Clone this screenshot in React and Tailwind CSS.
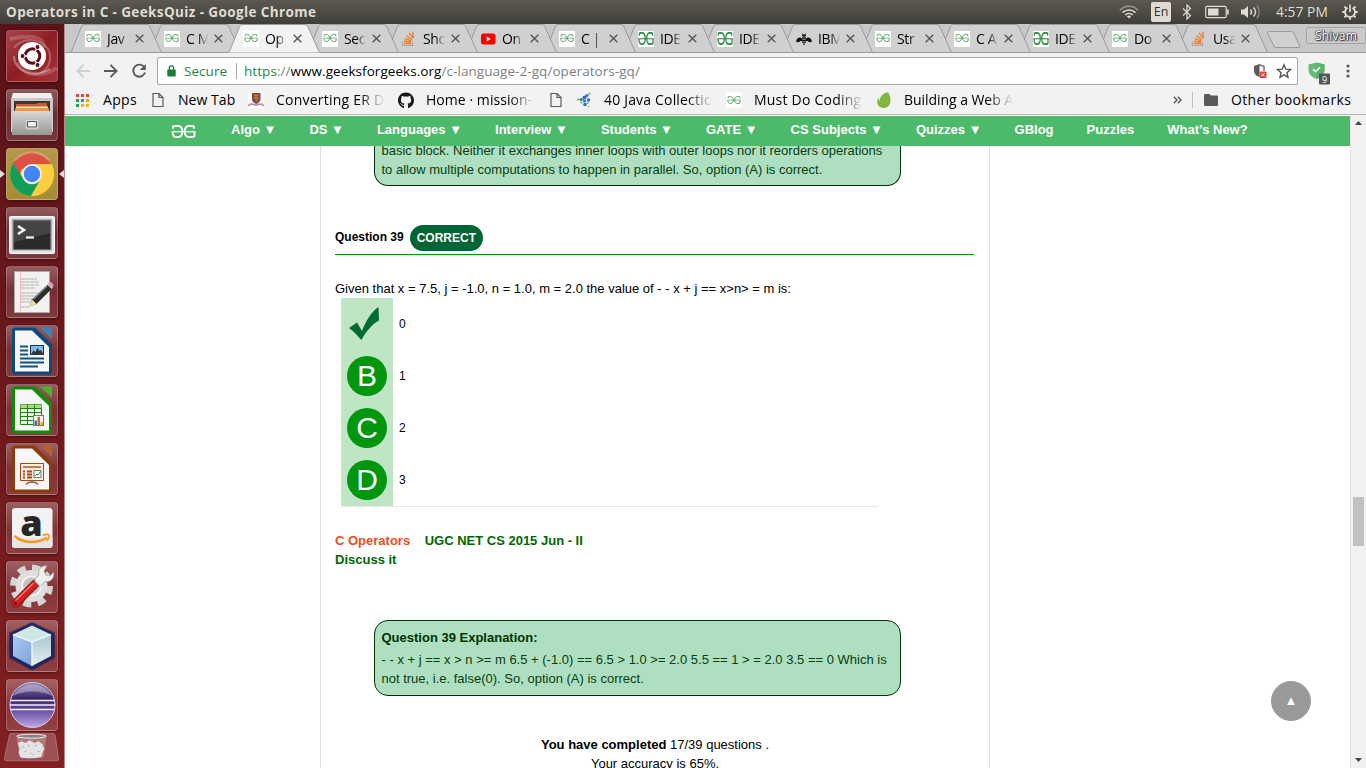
import React from 'react';
import { FaGithub } from 'react-icons/fa';

const UI = "font-['Open_Sans','Noto_Sans',sans-serif]";

/* ---------- favicons ---------- */

function GfgMark({ color, className, sw = 1.5, bar = 1.2 }) {
  return (
    <svg viewBox="0 0 26 14" className={className} preserveAspectRatio="none" fill="none" stroke={color} strokeWidth={sw}>
      <path d="M2.200 4V1.500C3.500 1 5 .900 6.300.900c4 0 5.500 2.600 5.500 6 0 4-2 6.200-5.600 6.200C3 13.100 1.600 11.500 1.600 7.300" />
      <path d="M23.800 4V1.500C22.500 1 21 .900 19.700.900c-4 0-5.500 2.600-5.500 6 0 4 2 6.200 5.600 6.200 2 0 3.600-.300 4.600-1V7.300" />
      <path d="M.500 7.300h25" strokeWidth={bar} />
    </svg>
  );
}

function Gfg() {
  return (
    <span className="flex h-4 w-4 items-center justify-center bg-white">
      <GfgMark color="#4a9a55" sw={1.7} bar={1.1} className="-mt-px h-[8px] w-[14px]" />
    </span>
  );
}

function GfgBig() {
  return (
    <span className="flex h-4 w-4 items-center justify-center bg-white">
      <GfgMark color="#2f8d46" sw={2} bar={1.2} className="h-[13px] w-4" />
    </span>
  );
}

function Stack() {
  return (
    <svg viewBox="0 0 16 16" className="h-4 w-4" fill="none">
      <path d="M1.500 10.500v4h10v-4" stroke="#a9a9ab" strokeWidth="1.200" />
      <g stroke="#ef7a26" strokeWidth="1.300">
        <path d="M3 12.500h7M3.100 10.200l7 .900M3.800 7.600l6.600 2.200M5.400 4.700l5.700 4M8.200 2l4 5.400M11.500.700l1.200 6" />
      </g>
    </svg>
  );
}

function Youtube() {
  return (
    <svg viewBox="0 0 16 16" className="h-4 w-4">
      <rect x="1" y="2.500" width="14.500" height="11" rx="2.500" fill="#f00" />
      <path d="M6.700 5.500v5l4-2.500z" fill="#fff" />
    </svg>
  );
}

function Bee() {
  return (
    <svg viewBox="0 0 16 16" className="h-4 w-4" fill="#111">
      <path d="M6 7.500C4 5.500.800 6.500 0 10.500c1 .800 2.500.800 3.500.200L6 9zM10 7.500c2-2 5.200-1 6 3-1 .800-2.500.800-3.500.200L10 9z" />
      <ellipse cx="8" cy="4.500" rx="2" ry="1.200" />
      <path d="M6 6.300h4v1.400H6zM5 8.500h6v1.400H5zM6 10.600h4v1.200H6zM7 12.500h2v1H7z" />
      <path d="M5.800 2.500l1.400 1.300M10.200 2.500L8.800 3.800" stroke="#111" strokeWidth=".700" />
    </svg>
  );
}

/* ---------- window title bar ---------- */

function TitleBar() {
  return (
    <header className={`${UI} flex h-6 shrink-0 items-center bg-linear-to-b from-[#5b5950] to-[#3f3e39] pl-[6px] text-[#dfdbd2]`}>
      <span className="text-[13.500px] font-bold leading-6 tracking-[0.390px] whitespace-nowrap">Operators in C - GeeksQuiz - Google Chrome</span>
      <div className="ml-auto flex items-center pr-[7px]">
        <svg viewBox="0 0 20 14" className="mr-[12px] h-[14px] w-5" fill="none" stroke="#dfdbd2" strokeWidth="1.500">
          <path d="M.800 5.200C6-.200 14-.200 19.200 5.200" stroke="#99968e" />
          <path d="M3.500 7.600c3.800-3.600 9.200-3.600 13 0M6.200 10c2.200-2 5.400-2 7.600 0" />
          <path d="M10 13.500L7.800 11.300c1.300-1 3.100-1 4.400 0z" fill="#dfdbd2" stroke="none" />
        </svg>
        <span className="flex h-5 w-5 items-center justify-center rounded-[2px] bg-[#dfdbd2] text-[12.500px] leading-5 text-[#353430]">En</span>
        <svg viewBox="0 0 10 16" className="ml-[11px] h-4 w-[10px]" fill="none" stroke="#dfdbd2" strokeWidth="1.200">
          <path d="M1 4.500l7.500 7L5 15V1l3.500 3.500L1 11.500" />
        </svg>
        <svg viewBox="0 0 24 14" className="ml-[13px] h-[14px] w-6" fill="none" stroke="#dfdbd2" strokeWidth="1.200">
          <rect x=".700" y="1.300" width="20.500" height="11.400" rx="1.500" />
          <path d="M22.800 4.500v5" strokeWidth="1.800" />
          <rect x="3" y="3.500" width="10.500" height="7" fill="#dfdbd2" stroke="none" />
        </svg>
        <svg viewBox="0 0 20 16" className="ml-[12px] h-4 w-5" fill="none" stroke="#dfdbd2" strokeWidth="1.400">
          <path d="M0 5.500h3L7 2v12l-4-3.500H0z" fill="#dfdbd2" stroke="none" />
          <path d="M9.500 5.500c1.300 1.500 1.300 3.500 0 5M12.500 3.500c2.500 2.700 2.500 6.300 0 9" />
          <path d="M15.800 1.500c3.200 3.700 3.200 9.300 0 13" stroke="#88857e" />
        </svg>
        <span className="ml-[15px] w-[54px] text-[13.800px] leading-6 tracking-[0.050px] whitespace-nowrap">4:57 PM</span>
        <svg viewBox="0 0 18 18" className="ml-[11px] h-[18px] w-[18px]" fill="none" stroke="#dfdbd2">
          <path d="M6.500 4.700A5 5 0 1 0 11.500 4.700" strokeWidth="1.900" />
          <path d="M9 1.500V9" strokeWidth="1.700" />
          <path d="M1.300 9h2.500M14.200 9h2.500M9 14.200v2.500M3.500 3.500l1.800 1.800M14.500 3.500l-1.800 1.800M3.500 14.500l1.800-1.800M14.500 14.500l-1.800-1.800" strokeWidth="1.900" />
        </svg>
      </div>
    </header>
  );
}

/* ---------- launcher ---------- */

const SHEET = 'M9 2.500h20L46 19.500v27.500c0 1.500-1 2.500-2.500 2.500h-35C7 49.500 6 48.500 6 47V5.500c0-2 1-3 3-3z';

const launcherItems = [
  {
    tile: 'bg-linear-to-br from-[#a8434b] via-[#8e1d22] to-[#a5353a]',
    art: (
      <>
        <g fill="none" stroke="#fff">
          <path d="M8 18C18 4 42 10 44 25c1 9-4 16-9 17" strokeOpacity=".250" strokeWidth="2" />
          <path d="M8 26c0 14 18 24 36 13" strokeOpacity=".350" strokeWidth="2" />
          <path d="M4 9c18-4 34-4 34 9M51 38c-16 10-34 8-39-6" strokeOpacity=".180" strokeWidth="4" />
        </g>
        <circle cx="26" cy="26" r="14" fill="#fff" />
        <circle cx="26.500" cy="26" r="7.300" fill="none" stroke="#5f0f19" strokeWidth="3" />
        <path d="M26.500 26L15 26M26.500 26l5.800-10M26.500 26l5.800 10" stroke="#fff" strokeWidth="1.300" />
        <circle cx="26.500" cy="26" r="5" fill="#fff" />
        <g fill="#5f0f19" stroke="#fff" strokeWidth="1">
          <circle cx="16.500" cy="26" r="2.500" />
          <circle cx="31.500" cy="17" r="2.500" />
          <circle cx="31.500" cy="35" r="2.500" />
        </g>
      </>
    ),
  },
  {
    art: (
      <>
        <path d="M7 4h38l2 6v33H5V10z" fill="#c9c9c9" />
        <path d="M7 4h38l1 5H6z" fill="#efefef" />
        <path d="M8 12h36v13H8z" fill="#3b3634" />
        <path d="M10 15h20l2-1h9v8H10z" fill="#c9602a" />
        <path d="M10 17.500h32v2H10z" fill="#fbe3c4" />
        <path d="M9 19.500h34V22H9z" fill="#ef9440" />
        <path d="M7 22h38l1 24H6z" fill="url(#silver)" />
        <rect x="19.500" y="30.500" width="13" height="9.500" rx="2" fill="#ddd" stroke="#bbb" />
        <rect x="21.500" y="32.500" width="9" height="5.500" rx="1" fill="#f4f4f4" stroke="#555" strokeWidth="1.200" />
      </>
    ),
  },
  {
    tile: 'bg-linear-to-b from-[#b09a49] to-[#a88c34]',
    active: true,
    art: (
      <>
        <circle cx="26" cy="26" r="22" fill="#ffcd40" />
        <path d="M26 26L6.900 15A22 22 0 0 1 45.500 16H26z" fill="#dd5144" />
        <path d="M26 16h19.500A22 22 0 0 0 6.900 15l9 16A10 10 0 0 1 26 16z" fill="#dd5144" />
        <path d="M7 15a22 22 0 0 0 18 33l9.700-16.500A10 10 0 0 1 17.300 31z" fill="#109e58" />
        <path d="M26 16h19.500A22 22 0 0 1 25 48l9.700-16.500A10 10 0 0 0 26 16z" fill="#ffcd40" />
        <path d="M9 12.500A22 22 0 0 1 43 12.500" fill="none" stroke="#fff" strokeOpacity=".300" strokeWidth="2" />
        <circle cx="26" cy="26" r="10" fill="#f4f4f4" />
        <circle cx="26" cy="26" r="8.200" fill="#4285f4" />
      </>
    ),
  },
  {
    art: (
      <>
        <rect x="3.500" y="9.500" width="45" height="37" rx="1" fill="#e2e2e2" stroke="#f8f8f8" />
        <rect x="6" y="12" width="40" height="31.500" fill="#aaa" />
        <rect x="7.500" y="13.500" width="37" height="29" fill="#2b2b2b" />
        <path d="M8 14h36v12L8 35z" fill="#444" />
        <path d="M12 19l6 4-6 4" fill="none" stroke="#f2f2f2" strokeWidth="2.600" />
        <path d="M20 30.500h8" stroke="#f2f2f2" strokeWidth="2.200" />
      </>
    ),
  },
  {
    art: (
      <>
        <rect x="8.500" y="5.500" width="35" height="41" fill="#f1f1ef" stroke="#a6aaa6" />
        <path d="M14.500 6v40" stroke="#f0a0a0" strokeWidth=".700" />
        <path d="M15 13h16M15 16h18M15 19h18M15 22h14M15 27h18M15 30h16M15 33h12M15 36h10M15 41h8" stroke="#b0b0b0" strokeWidth="1.100" strokeDasharray="4 .6" />
        <path d="M23.500 40.500l2.500-7 16-15 4 4-15.500 15.500z" fill="#2e2e2e" />
        <path d="M27.500 33L41 20" stroke="#888" strokeWidth="1.400" />
        <path d="M23.500 40.500l2.500-7 4.500 4.500z" fill="#f0e0a0" />
        <path d="M41 18.500l4.500 4.500 1.500-1.500-4.500-4.500z" fill="#ccc" />
        <path d="M42 17.500l4 4 1.500-2c.500-1-2.500-4-3.500-3.500z" fill="#e79ac0" />
      </>
    ),
  },
  {
    art: (
      <>
        <path d={SHEET} fill="#0a4a7d" />
        <path d="M34 2.500h12v11.500z" fill="#3e85b5" />
        <path d="M9 5.500h17L43 22v24.500H9z" fill="#f6f6f6" />
        <path d="M14 21.500h8M14 25.500h8M14 29.500h8M14 33.500h24M14 37.500h24M14 41.500h18" stroke="#10527f" strokeWidth="2" />
        <rect x="24.500" y="20.500" width="13" height="9" fill="#7fbbe0" stroke="#0b3a60" />
        <path d="M25 29.500l2.500-4 2 1.500 2-4 2 3 1.500-1 2.500 4.500z" fill="#333" />
      </>
    ),
  },
  {
    art: (
      <>
        <path d={SHEET} fill="#16890a" />
        <path d="M34 2.500h12v11.500z" fill="#4ab52c" />
        <path d="M9 5.500h17L43 22v24.500H9z" fill="#f6f6f6" />
        <path d="M14.500 20.500h21v20h-21z" fill="#e9f6e0" stroke="#1c8010" />
        <path d="M14.500 20.500h21v4h-21z" fill="#a6dc82" />
        <path d="M14.500 24.500h21M14.500 28.500h21M14.500 32.500h21M14.500 36.500h21M21.500 20.500v20M28.500 20.500v20" stroke="#1c8010" />
        <rect x="27.500" y="31.500" width="10" height="10" fill="#f4f4f4" stroke="#777" />
        <path d="M28.500 36.500h2.500v4.500h-2.500z" fill="#2d80c0" />
        <path d="M31.500 33h2.500v8h-2.500z" fill="#e2641c" />
        <path d="M34.500 38H37v3h-2.500z" fill="#f0b010" />
      </>
    ),
  },
  {
    art: (
      <>
        <path d={SHEET} fill="#8a3c0c" />
        <path d="M34 2.500h12v11.500z" fill="#b4602f" />
        <path d="M9 5.500h17L43 22v24.500H9z" fill="#f6f6f6" />
        <path d="M20 41.500c2-3.500 10-3.500 12 0M26 36v3" stroke="#666" strokeWidth="1.500" fill="none" />
        <rect x="14.500" y="20.500" width="23" height="17" fill="#fbefe4" stroke="#b0480f" />
        <path d="M17 24h18" stroke="#d26a28" strokeWidth="1.800" />
        <path d="M17 28.500h2M17 31.500h2M17 34.500h2M21 28.500h5M21 31.500h5M21 34.500h5" stroke="#a84510" strokeWidth="1.800" />
        <rect x="28" y="27.500" width="7" height="7" fill="#fff" stroke="#777" />
        <path d="M29 33l2-2 1 1 2.500-3.500" stroke="#2c9030" fill="none" />
      </>
    ),
  },
  {
    art: (
      <>
        <rect x="6" y="6" width="40.500" height="40" rx="3" fill="#f2f2f2" />
        <path d="M6 36h40.500v7c0 2-1 3-3 3h-34.500c-2 0-3-1-3-3z" fill="#e6e6e6" />
        <text x="25.500" y="33.500" textAnchor="middle" fontFamily="Open Sans" fontWeight="800" fontSize="36" fill="#262626">a</text>
        <path d="M8.500 34c9 7.500 22 8 32.500 1.500" fill="none" stroke="#f7981d" strokeWidth="2.400" />
        <path d="M36.500 33.500c3-1.200 5.500-1.300 6.500-.500.500 1.500-.500 4-2.500 6" fill="none" stroke="#f7981d" strokeWidth="1.600" />
      </>
    ),
  },
  {
    art: (
      <>
        <circle cx="25.500" cy="25" r="18.500" fill="none" stroke="#d5d5d5" strokeWidth="6" strokeDasharray="8 6.530" />
        <circle cx="25.500" cy="25" r="16" fill="#dedede" />
        <circle cx="25.500" cy="25" r="9.500" fill="#c4c4c4" stroke="#f2f2f2" strokeWidth="2" />
        <path d="M9.500 42.500L29 23" stroke="#8f1010" strokeWidth="8.500" strokeLinecap="round" />
        <path d="M9.500 42.500L29 23" stroke="#d4211f" strokeWidth="6.500" strokeLinecap="round" />
        <path d="M10 39L27 22.500" stroke="#f07a70" strokeWidth="1.500" strokeLinecap="round" />
        <circle cx="9.500" cy="42.500" r="1.700" fill="#6b0b0b" />
        <path d="M29 18l4-4c-1.500-5 2-10 8-9l-3 5 2 4 4 1 3.500-4c1.500 6-3 10.500-8.500 9.500l-5 5-5-5z" fill="#f0f0ef" stroke="#999" strokeWidth=".700" />
      </>
    ),
  },
  {
    art: (
      <>
        <path d="M26 3L48 13.500v24L26 49.500 4 37.500v-24z" fill="#15235f" fillOpacity=".850" stroke="#15235f" strokeOpacity=".600" strokeWidth="2" strokeLinejoin="round" />
        <path d="M26 5.500L45 14.500 26 22 7 14.500z" fill="#cde7e5" />
        <path d="M7 14.500L26 22v24L7 36z" fill="url(#cubeL)" />
        <path d="M45 14.500L26 22v24l19-10z" fill="url(#cubeR)" />
        <path d="M7 14.500L26 22l19-7.500M26 22v24" fill="none" stroke="#edf7fb" strokeWidth="1.500" />
      </>
    ),
  },
  {
    art: (
      <>
        <circle cx="26.500" cy="26" r="22.500" fill="url(#eclipse)" stroke="#d6cbea" strokeWidth="1" />
        <path d="M7 17a22 22 0 0 1 39 0c-10-6-29-6-39 0z" fill="#fff" fillOpacity=".350" />
        <path d="M4.500 21.500h44M4 26h45M4.500 30.500h44" stroke="#f3effa" strokeWidth="1.400" />
      </>
    ),
  },
];

function Launcher() {
  return (
    <aside className="flex h-full w-[65px] shrink-0 flex-col border-r border-[#b9888b] bg-linear-to-b from-[#591318] to-[#822022] pt-[6px]">
      <svg className="absolute h-0 w-0">
        <defs>
          <linearGradient id="silver" x1="0" y1="0" x2="0" y2="1"><stop offset="0" stopColor="#d8d8d8" /><stop offset="1" stopColor="#979797" /></linearGradient>
          <linearGradient id="cubeL" x1="0" y1="0" x2="1" y2="1"><stop offset="0" stopColor="#a9c9ef" /><stop offset="1" stopColor="#7ea3dc" /></linearGradient>
          <linearGradient id="cubeR" x1="0" y1="0" x2="0" y2="1"><stop offset="0" stopColor="#a7c6d2" /><stop offset="1" stopColor="#e6eff5" /></linearGradient>
          <linearGradient id="eclipse" x1="0" y1="0" x2="0" y2="1"><stop offset="0" stopColor="#8d7fb8" /><stop offset=".350" stopColor="#3a2468" /><stop offset=".550" stopColor="#5a3f96" /><stop offset="1" stopColor="#bda6e4" /></linearGradient>
        </defs>
      </svg>
      {launcherItems.map((item, i) => (
        <div key={i} className="mb-[7px] flex h-[52px] shrink-0 items-center">
          <span className="flex w-[6px] shrink-0">
            {item.active && <svg viewBox="0 0 5 8" className="h-2 w-[5px]"><path d="M0 0l5 4-5 4z" fill="#ddd" /></svg>}
          </span>
          <div className={`h-[52px] w-[52px] shrink-0 rounded-[4px] border border-white/20 shadow-[0_1px_3px_rgba(0,0,0,0.4)] ${item.tile || 'bg-linear-to-b from-white/30 via-white/10 to-white/15'}`}>
            <svg viewBox="0 0 52 52" className="-m-px h-[52px] w-[52px]">{item.art}</svg>
          </div>
          {item.active && <svg viewBox="0 0 5 8" className="ml-px h-2 w-[5px]"><path d="M5 0L0 4l5 4z" fill="#ddd" /></svg>}
        </div>
      ))}
      <svg viewBox="0 0 65 36" className="-mt-[6px] h-9 w-[64px] shrink-0">
        <path d="M12 1h41c2 0 2.500 1 3 2l3.500 23c.300 2-.500 3-2.500 3H7c-2 0-2.500-1-2.500-3L9.500 3c.500-1.500 1-2 2.500-2z" fill="#fff" fillOpacity=".220" stroke="#fff" strokeOpacity=".250" />
        <path d="M17 4h30l-2.500 21c-4 1.500-21 1.500-25 0z" fill="#ddd" fillOpacity=".300" />
        <ellipse cx="32" cy="4" rx="15" ry="2" fill="#8a7f7f" stroke="#eee" />
        <path d="M18 11l4-2 4 2 4-3 5 3 4-2 4 3 2 5-2 4-1 4-7 1.500-8 0-6-1-2-5 1-4z" fill="#e4e4e4" />
        <path d="M22 14l3 2M28 12l2 3M35 14l3-1M24 20l3-1M31 21l3 2M38 19l3 1" stroke="#b5b5b5" fill="none" />
      </svg>
    </aside>
  );
}

/* ---------- browser chrome ---------- */

const tabs = [
  [Gfg, 'Jav'], [Gfg, 'C M'], [Gfg, 'Op'], [Gfg, 'Sec'], [Stack, 'Sho'], [Youtube, 'On'], [Gfg, 'C | S'], [GfgBig, 'IDE'],
  [GfgBig, 'IDE'], [Bee, 'IBM'], [Gfg, 'Str'], [Gfg, 'C A'], [GfgBig, 'IDE'], [Gfg, 'Do'], [Stack, 'Usa'],
];

function Tab({ icon: Icon, title, active, z }) {
  return (
    <div className="relative -mr-3 grid h-[29px] w-[91px] shrink-0" style={{ zIndex: z }}>
      <svg viewBox="0 0 91 29" className="col-start-1 row-start-1 h-[29px] w-[91px]">
        <path d="M0 28.500L10.500 2.500Q11.300.500 13 .500h63q2 0 2.800 2L90.500 28.500z" fill={active ? '#f2f2f2' : '#d0d0d0'} />
        <path d="M0 28.500L10.500 2.500Q11.300.500 13 .500h63q2 0 2.800 2L90.500 28.500" fill="none" stroke="#999" />
        {!active && <path d="M0 28.500h91" stroke="#9b9b9b" />}
      </svg>
      <div className="col-start-1 row-start-1 flex items-center pl-[14px]">
        <Icon />
        <span className={`${UI} ml-[6px] w-[26px] text-[14px] leading-5 tracking-[-0.350px] whitespace-nowrap text-black [mask-image:linear-gradient(to_right,#000_45%,transparent_86%)]`}>{title}</span>
        <svg viewBox="0 0 9 9" className="ml-[2px] h-[9px] w-[9px]"><path d="M.700.700l7.600 7.600M8.300.700L.700 8.300" stroke="#5a5a5a" strokeWidth="1.500" /></svg>
      </div>
    </div>
  );
}

function TabStrip() {
  return (
    <div className="flex h-[29px] w-full shrink-0 bg-[linear-gradient(#9b9b9b,#9b9b9b)] bg-[#c8c8c8] bg-[length:100%_1px] bg-bottom bg-no-repeat pl-[6px]">
      {tabs.map(([icon, title], i) => (
        <Tab key={i} icon={icon} title={title} active={i === 2} z={i === 2 ? 40 : 30 - i} />
      ))}
      <svg viewBox="0 0 36 18" className="mt-[7px] ml-[10px] h-[18px] w-9"><path d="M3.500.500h22q1.500 0 2.300 1.500l6 13q.700 1.500-1 1.500H10q-1.500 0-2.200-1.500L1.700 2.500Q1 .500 3.500.500z" fill="#d0d0d0" stroke="#999" /></svg>
      <div className={`${UI} mt-[3px] ml-auto flex h-[17px] w-[60px] items-center justify-center rounded-[2px] border border-[#a5a5a5] bg-[#cacaca] text-[12px] tracking-[0.250px] text-white [text-shadow:0_0_1px_#333,0_0_1px_#333,0_0_2px_#333,1px_1px_1px_#333]`}>Shivam</div>
    </div>
  );
}

function AddressRow() {
  return (
    <div className="flex h-[32px] items-center pt-[4px] pl-[11px]">
      <svg viewBox="0 0 14 14" className="h-[14px] w-[14px]" fill="none" stroke="#cfcfcf" strokeWidth="1.900"><path d="M14 7H1.500M7.500.800L1.400 7l6.100 6.200" /></svg>
      <svg viewBox="0 0 14 14" className="ml-[14px] h-[14px] w-[14px]" fill="none" stroke="#5a5a5a" strokeWidth="1.900"><path d="M0 7h12.500M6.500.800L12.600 7l-6.100 6.200" /></svg>
      <svg viewBox="0 0 16 16" className="ml-[13px] h-4 w-4" fill="none" stroke="#5a5a5a" strokeWidth="1.900"><path d="M13.200 4.200A6 6 0 1 0 14 9.500" /><path d="M14.800 1v6H8.800z" fill="#5a5a5a" stroke="none" /></svg>
      <div className={`${UI} ml-[10px] flex h-7 w-[1141px] items-center rounded-[2px] border border-[#a6a6a6] bg-white pl-[9px] text-[13.500px]`}>
        <svg viewBox="0 0 9 12" className="h-3 w-[9px]"><path d="M2.300 5V3a2.200 2.200 0 0 1 4.400 0v2" fill="none" stroke="#168039" strokeWidth="1.300" /><rect x=".300" y="4.500" width="8.400" height="7" rx=".800" fill="#168039" /></svg>
        <span className="ml-[8px] w-[52px] leading-5 tracking-[0.050px] whitespace-nowrap text-[#1f8742]">Secure</span>
        <span className="h-4 w-px bg-[#aaa]" />
        <span className="ml-[7px] leading-5 tracking-[0.060px] whitespace-nowrap text-[#808080]"><span className="text-[#1f8742]">https</span>://<span className="text-black">www.geeksforgeeks.org</span>/c-language-2-gq/operators-gq/</span>
        <svg viewBox="0 0 14 16" className="ml-auto h-4 w-[14px]">
          <path d="M6.500 1L1 3v4.500c0 3 2 5.700 5.500 6.500z" fill="#5a5a5a" />
          <path d="M6 1.600l5 1.800V8" fill="none" stroke="#5a5a5a" strokeWidth="1.300" />
          <rect x="6.500" y="8.500" width="7" height="6.500" rx=".800" fill="#db4437" />
          <path d="M8.500 10.300l3 3M11.500 10.300l-3 3" stroke="#fff" strokeWidth=".900" />
        </svg>
        <svg viewBox="0 0 16 16" className="mr-[5px] ml-[9px] h-4 w-4" fill="none" stroke="#555" strokeWidth="1.400"><path d="M8 1.800l1.800 4.400 4.700.400-3.600 3.100 1.100 4.600L8 11.800l-4 2.500 1.100-4.600-3.600-3.100 4.700-.400z" /></svg>
      </div>
      <svg viewBox="0 0 24 24" className="mt-[3px] ml-[9px] h-6 w-6">
        <path d="M9.500 1.500L1.500 3.500v5c0 4.500 3 7.500 8 9.500 5-2 8-5 8-9.500v-5z" fill="#63bb77" />
        <path d="M9.500 1.500l8 2v5c0 4.500-3 7.500-8 9.500z" fill="#58b36d" />
        <path d="M6 8.300l2.500 2.500 4.500-4.500" fill="none" stroke="#fff" strokeWidth="1.500" />
        <rect x="12" y="12.500" width="11" height="11" rx="1" fill="#555" />
        <text x="17.500" y="21.500" textAnchor="middle" fontSize="9" fontFamily="Open Sans" fill="#fff">9</text>
      </svg>
      <svg viewBox="0 0 4 14" className="ml-[15px] h-[14px] w-1" fill="#5a5a5a"><circle cx="2" cy="2" r="1.600" /><circle cx="2" cy="7" r="1.600" /><circle cx="2" cy="12" r="1.600" /></svg>
    </div>
  );
}

function Doc() {
  return <svg viewBox="0 0 12 16" className="h-4 w-3" fill="none" stroke="#5a5a5a" strokeWidth="1.200"><path d="M1 1.500h6l4 4v9H1zM7 1.500v4h4" /></svg>;
}

const FADE = '[mask-image:linear-gradient(to_right,#000_76%,transparent_99%)]';

function BookmarksBar() {
  return (
    <div className={`${UI} flex h-[30px] items-center pl-[11px] text-[14px] leading-5 whitespace-nowrap text-black`}>
      <svg viewBox="0 0 13 13" className="h-[13px] w-[13px]">
        <path d="M0 0h3v3H0zM5 0h3v3H5zM10 0h3v3h-3z" fill="#f03e3a" />
        <path d="M0 5h3v3H0z" fill="#24965a" /><path d="M5 5h3v3H5z" fill="#3b82f6" /><path d="M10 5h3v3h-3z" fill="#f5a31a" />
        <path d="M0 10h3v3H0z" fill="#24a45c" /><path d="M5 10h3v3H5zM10 10h3v3h-3z" fill="#f5b21a" />
      </svg>
      <span className="ml-[14px] w-[49px] tracking-[0.300px]">Apps</span>
      <Doc />
      <span className="ml-[14px] w-[70px] tracking-[0.050px]">New Tab</span>
      <svg viewBox="0 0 16 16" className="h-4 w-4">
        <rect width="16" height="16" fill="#fbf9fa" />
        <path d="M4 1h8.500v6c0 2.500-2 4-4.200 5C6 11 4 9.500 4 7z" fill="#7d4a45" />
        <path d="M6 3.500h4.500M6 6h4.500M7.500 8.500h2" stroke="#d08a30" strokeWidth="1.300" />
        <path d="M.500 14c1-3 4-2 7.500-1 3.500-1 6.500-2 7.500 1" fill="none" stroke="#b98ab0" strokeWidth="1.600" />
      </svg>
      <span className={`ml-[12px] w-[110px] overflow-hidden tracking-[0.220px] ${FADE}`}>Converting ER D</span>
      <FaGithub className="ml-[12px] h-[17px] w-4 text-[#191717]" />
      <span className={`ml-[12px] w-[110px] overflow-hidden tracking-[0.050px] ${FADE}`}>Home · mission-</span>
      <span className="ml-[14px] flex"><Doc /></span>
      <svg viewBox="0 0 16 16" className="ml-[14px] h-4 w-4">
        <g fill="#2d6fc4"><circle cx="5" cy="7.500" r="1.500" /><circle cx="8.500" cy="5.500" r="2" /><circle cx="11" cy="3.500" r="1.500" /><circle cx="8.500" cy="9" r="1.500" /><circle cx="12.500" cy="8" r="1.700" /><circle cx="9" cy="12.500" r="1.800" /></g>
        <g fill="#6aa72e"><circle cx="2" cy="7.500" r="1" /><circle cx="13.500" cy="1.500" r="1" /><circle cx="5.500" cy="10.500" r="1" /><circle cx="11.500" cy="11" r="1" /><circle cx="12.500" cy="14.500" r=".800" /><circle cx="7" cy="7.500" r="1" /></g>
      </svg>
      <span className={`ml-[12px] w-[110px] overflow-hidden tracking-[0.180px] ${FADE}`}>40 Java Collectic</span>
      <span className="ml-[12px]"><Gfg /></span>
      <span className={`ml-[12px] w-[110px] overflow-hidden tracking-[0.220px] ${FADE}`}>Must Do Coding</span>
      <svg viewBox="0 0 16 16" className="ml-[12px] h-4 w-4"><path d="M11.500.200C7.500 1 4 4 3.700 9 3.500 9.300 2.500 8 3 5.500.500 8 .700 12 3 14.200c3 2.700 8 2.200 10.300-1.200C15.500 9.500 14.500 4 12.200.500 12 .200 11.800.100 11.500.200z" fill="#82b541" /></svg>
      <span className={`ml-[12px] w-[110px] overflow-hidden tracking-[-0.050px] ${FADE}`}>Building a Web A</span>
      <svg viewBox="0 0 9 8" className="ml-[159px] h-2 w-[9px]" fill="none" stroke="#555" strokeWidth="1.400"><path d="M.800.800L4 4 .800 7.200M4.800.800L8 4 4.800 7.200" /></svg>
      <span className="ml-[10px] h-4 w-px bg-[#c0c0c0]" />
      <svg viewBox="0 0 14 12" className="ml-[11px] h-3 w-[14px]" fill="#5a5a5a"><path d="M1 0h4.500L7 1.500h6q1 0 1 1V11q0 1-1 1H1q-1 0-1-1V1q0-1 1-1z" /></svg>
      <span className="ml-[13px] tracking-[0.350px]">Other bookmarks</span>
    </div>
  );
}

/* ---------- page ---------- */

const navItems = ['Algo ▼', 'DS ▼', 'Languages ▼', 'Interview ▼', 'Students ▼', 'GATE ▼', 'CS Subjects ▼', 'Quizzes ▼', 'GBlog', 'Puzzles', 'What’s New?'];

function SiteNav() {
  return (
    <nav className="flex h-[30px] shrink-0 items-center bg-[#4dba6b] pl-[106px] text-[13px] font-bold text-white">
      <GfgMark color="#fff" sw={1.900} bar={1.3} className="mr-[35px] h-[13px] w-[25px]" />
      <ul className="flex gap-[33px] pb-[3px] leading-5 whitespace-nowrap">
        {navItems.map((t) => <li key={t}>{t}</li>)}
      </ul>
    </nav>
  );
}

function Option({ letter, value }) {
  return (
    <div className="flex h-[52px] items-center">
      <div className="flex h-[52px] w-[52px] items-center justify-center bg-[#c0e5c4]">
        {letter ? (
          <span className="flex h-10 w-10 items-center justify-center rounded-full bg-[#00960e] text-[30px] leading-10 text-white">{letter}</span>
        ) : (
          <svg viewBox="0 0 30 33" className="mr-[6px] mb-px h-[33px] w-[30px]"><path d="M0 21l8-5.500 5 8.500C17 14 22 5 29.500 0l.500 13.500C23 17 17 24.500 12.500 33 8.500 29 5 24.500 0 21z" fill="#006b33" /></svg>
        )}
      </div>
      <span className="ml-[6px] text-[12px]">{value}</span>
    </div>
  );
}

function Quiz() {
  return (
    <article className="ml-[255px] flex h-full w-[670px] flex-col overflow-hidden border-x border-[#e3e3e3] pr-[15px] pl-[14px] text-[13px] leading-[19px] text-black">
      <div className="-mt-[5px] ml-[39px] h-[45px] w-[527px] shrink-0 rounded-b-[14px] border border-t-0 border-[#003300] bg-[#addfc0] pl-[6.500px] whitespace-nowrap text-[#0a400f]">
        basic block. Neither it exchanges inner loops with outer loops nor it reorders operations<br />
        to allow multiple computations to happen in parallel. So, option (A) is correct.
      </div>

      <div className="mt-[39px] flex h-[30px] shrink-0 items-start border-b border-[#00900a] text-[12px] font-bold">
        <span className="pt-[3px]">Question 39</span>
        <span className="ml-[6px] h-[26px] rounded-full bg-[#006633] px-[7px] leading-[26px] text-white">CORRECT</span>
      </div>

      <p className="mt-6 shrink-0">Given that x = 7.5, j = -1.0, n = 1.0, m = 2.0 the value of - - x + j == x&gt;n&gt; = m is:</p>
      <div className="ml-[6px] w-[537px] shrink-0 border-b border-[#e8e8e8]">
        <Option value="0" />
        <Option letter="B" value="1" />
        <Option letter="C" value="2" />
        <Option letter="D" value="3" />
      </div>

      <div className="mt-6 shrink-0 font-bold text-[#006600]">
        <p><span className="mr-[14.500px] text-[#ec4e20]">C Operators</span><span>UGC NET CS 2015 Jun - II</span></p>
        <p>Discuss it</p>
      </div>

      <div className="mt-[51px] ml-[39px] h-[76px] w-[527px] shrink-0 rounded-[14px] border border-[#003300] bg-[#addfc0] pt-[7px] pl-[6.500px] whitespace-nowrap text-[#0a400f]">
        <h3 className="mb-[3px] font-bold text-[#003300]">Question 39 Explanation:</h3>
        - - x + j == x &gt; n &gt;= m 6.5 + (-1.0) == 6.5 &gt; 1.0 &gt;= 2.0 5.5 == 1 &gt; = 2.0 3.5 == 0 Which is<br />
        not true, i.e. false(0). So, option (A) is correct.
      </div>

      <div className="mt-[39px] shrink-0 pl-px text-center">
        <p><b>You have completed</b> 17/39 questions .</p>
        <p>Your accuracy is 65%.</p>
      </div>
    </article>
  );
}

function Scrollbar() {
  return (
    <div className="flex w-[16px] shrink-0 flex-col items-center border-l border-[#e3e3e3] bg-[#f1f1f1] pt-[6px] pb-[6px]">
      <svg viewBox="0 0 7 4" className="h-1 w-[7px]"><path d="M3.500 0L7 4H0z" fill="#444" /></svg>
      <div className="mt-[372px] mr-px h-[49px] w-[11px] bg-[#c1c1c1]" />
      <svg viewBox="0 0 7 4" className="mt-auto h-1 w-[7px]"><path d="M3.500 4L0 0h7z" fill="#444" /></svg>
    </div>
  );
}

export default function App() {
  return (
    <div className="flex h-[768px] w-[1366px] flex-col overflow-hidden bg-white font-['Liberation_Sans',Arial,sans-serif]">
      <TitleBar />
      <div className="flex min-h-0 flex-1">
        <Launcher />
        <section className="flex min-w-0 flex-1 flex-col">
          <TabStrip />
          <div className="h-[62px] shrink-0 border-b border-[#b6b6b6] bg-[#f2f2f2]">
            <AddressRow />
            <BookmarksBar />
          </div>
          <div className="flex min-h-0 flex-1">
            <main className="relative flex w-[1285px] flex-col border-t border-white bg-white">
              <SiteNav />
              <div className="min-h-0 flex-1"><Quiz /></div>
              <button className="absolute right-[39px] bottom-[47px] h-10 w-10 rounded-full border border-[#999] bg-[#999] text-[13px] text-white">▲</button>
            </main>
            <Scrollbar />
          </div>
        </section>
      </div>
    </div>
  );
}
